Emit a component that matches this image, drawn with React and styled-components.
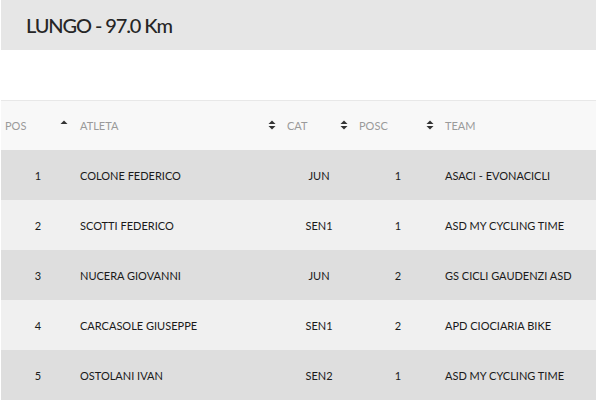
import React from "react";
import styled, { createGlobalStyle } from "styled-components";

const Global = createGlobalStyle`
  html, body { margin: 0; padding: 0; background: #fff; }
  body { font-family: Lato, "Open Sans", sans-serif; }
`;

const Page = styled.div`
  padding: 0 1px;
  width: 595px;
`;

const TitleBar = styled.div`
  height: 50px;
  background: #e6e6e6;
  display: flex;
  align-items: center;
  padding-left: 25px;
  font-size: 20px;
  letter-spacing: -1.1px;
  color: #262626;
  font-weight: 500;
  margin-bottom: 50px;
  box-sizing: border-box;
`;

const Table = styled.table`
  width: 595px;
  border-collapse: collapse;
  table-layout: fixed;
`;

const HeadRow = styled.tr`
  height: 49px;
  background: #f8f8f8;
  border-top: 1px solid #e8e8e8;
`;

const Th = styled.th`
  width: ${(p) => p.$w}px;
  height: 49px;
  text-align: left;
  font-weight: 400;
  font-size: 11px;
  color: #9a9a9a;
  padding: 0 4px 0 ${(p) => p.$pl}px;
  box-sizing: border-box;
`;

const ThInner = styled.div`
  display: flex;
  align-items: center;
  justify-content: space-between;
`;

const Row = styled.tr`
  height: 50px;
  background: ${(p) => (p.$odd ? "#dedede" : "#f0f0f0")};
`;

const Td = styled.td`
  height: 50px;
  font-size: 11px;
  color: #1a1a1a;
  padding: 2px 4px 0 ${(p) => p.$pl}px;
  text-align: ${(p) => (p.$center ? "center" : "left")};
  box-sizing: border-box;
`;

const SortIcon = ({ only }) => (
  <svg width="8" height="10" viewBox="0 0 8 10" style={{ marginRight: 3 }}>
    <path d="M0.5 4 L4 0.5 L7.5 4 Z" fill="#333" />
    {!only && <path d="M0.5 6 L4 9.5 L7.5 6 Z" fill="#333" />}
  </svg>
);

const rows = [
  ["1", "COLONE FEDERICO", "JUN", "1", "ASACI - EVONACICLI"],
  ["2", "SCOTTI FEDERICO", "SEN1", "1", "ASD MY CYCLING TIME"],
  ["3", "NUCERA GIOVANNI", "JUN", "2", "GS CICLI GAUDENZI ASD"],
  ["4", "CARCASOLE GIUSEPPE", "SEN1", "2", "APD CIOCIARIA BIKE"],
  ["5", "OSTOLANI IVAN", "SEN2", "1", "ASD MY CYCLING TIME"],
];

const cols = [
  { label: "POS", w: 74, icon: "up", pl: 4 },
  { label: "ATLETA", w: 208, icon: "both", pl: 5 },
  { label: "CAT", w: 72, icon: "both", pl: 4 },
  { label: "POSC", w: 86, icon: "both", pl: 4 },
  { label: "TEAM", w: 155, pl: 4 },
];

export default function App() {
  return (
    <>
      <Global />
      <Page>
        <TitleBar>LUNGO - 97.0 Km</TitleBar>
        <Table>
          <thead>
            <HeadRow>
              {cols.map((c) => (
                <Th key={c.label} $w={c.w} $pl={c.pl}>
                  <ThInner>
                    <span>{c.label}</span>
                    {c.icon && <SortIcon only={c.icon === "up"} />}
                  </ThInner>
                </Th>
              ))}
            </HeadRow>
          </thead>
          <tbody>
            {rows.map((r, i) => (
              <Row key={i} $odd={i % 2 === 0}>
                <Td $center $pl={4}>{r[0]}</Td>
                <Td $pl={5}>{r[1]}</Td>
                <Td $center $pl={4}>{r[2]}</Td>
                <Td $center $pl={4}>{r[3]}</Td>
                <Td $pl={4}>{r[4]}</Td>
              </Row>
            ))}
          </tbody>
        </Table>
      </Page>
    </>
  );
}
